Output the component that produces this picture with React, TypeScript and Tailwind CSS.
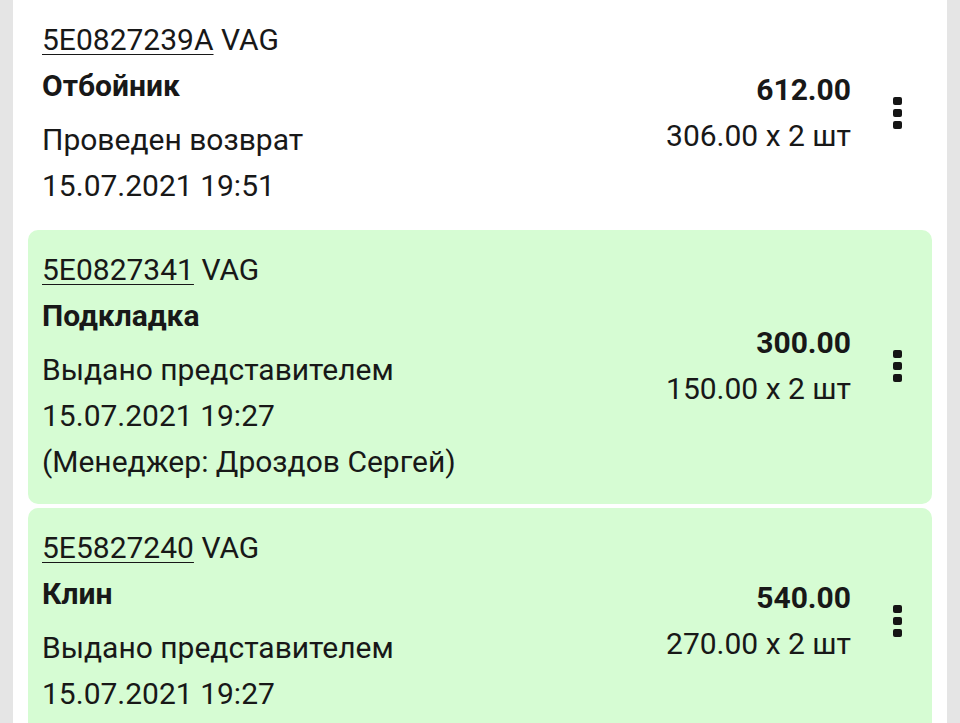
const items = [
  {
    code: "5E0827239A",
    brand: "VAG",
    name: "Отбойник",
    lines: ["Проведен возврат", "15.07.2021 19:51"],
    total: "612.00",
    unit: "306.00 x 2 шт",
    issued: false,
  },
  {
    code: "5E0827341",
    brand: "VAG",
    name: "Подкладка",
    lines: ["Выдано представителем", "15.07.2021 19:27", "(Менеджер: Дроздов Сергей)"],
    total: "300.00",
    unit: "150.00 x 2 шт",
    issued: true,
  },
  {
    code: "5E5827240",
    brand: "VAG",
    name: "Клин",
    lines: ["Выдано представителем", "15.07.2021 19:27"],
    total: "540.00",
    unit: "270.00 x 2 шт",
    issued: true,
  },
];

const MoreDots = () => (
  <div className="flex flex-col gap-[4px]">
    <span className="block h-[8px] w-[9px] rounded-[2px] bg-[#151515]" />
    <span className="block h-[8px] w-[9px] rounded-[2px] bg-[#151515]" />
    <span className="block h-[8px] w-[9px] rounded-[2px] bg-[#151515]" />
  </div>
);

const App = () => {
  return (
    <div
      className="flex h-[723px] w-[960px] overflow-hidden bg-[#e5e5e5] text-[#181818]"
      style={{ fontFamily: "Roboto, 'Noto Sans', sans-serif" }}
    >
      <div className="mx-[13px] flex flex-1 flex-col gap-[4px] bg-white px-[15px]">
        {items.map((item, i) => (
          <div
            key={item.code}
            className={`flex shrink-0 items-center rounded-[10px] pb-[19px] pl-[14px] pt-[17px] ${
              item.issued ? "bg-[#d6fcd3]" : "bg-white"
            } ${i === 0 ? "-mb-[2px]" : ""}`}
          >
            <div className="flex-1 text-[30px] leading-[46px]">
              <p>
                <span className="underline decoration-1 underline-offset-[4px]">{item.code}</span>{" "}
                {item.brand}
              </p>
              <p className="mb-[8px] font-bold">{item.name}</p>
              {item.lines.map((line) => (
                <p key={line}>{line}</p>
              ))}
            </div>
            <div className="text-right text-[30px] leading-[46px]">
              <p className="font-bold">{item.total}</p>
              <p>{item.unit}</p>
            </div>
            <div className="ml-[42px] mr-[30px]">
              <MoreDots />
            </div>
          </div>
        ))}
      </div>
    </div>
  );
};

export default App;
